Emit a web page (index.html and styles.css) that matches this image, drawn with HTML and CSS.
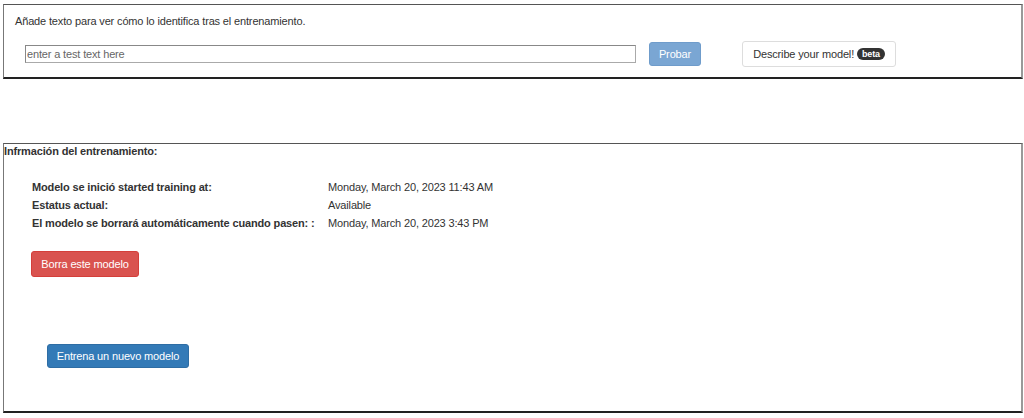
FILE: index.html
```html
<!DOCTYPE html>
<html lang="es">
<head>
  <meta charset="UTF-8" />
  <title>Modelo</title>
  <link rel="stylesheet" href="styles.css">
</head>
<body>
  <div class="panel test-panel">
    <div class="intro">Añade texto para ver cómo lo identifica tras el entrenamiento.</div>
    <div class="test-row">
      <input type="text" class="test-input" placeholder="enter a test text here" />
      <button class="btn btn-try">Probar</button>
      <button class="btn btn-describe">Describe your model! <span class="badge">beta</span></button>
    </div>
  </div>

  <div class="panel info-panel">
    <div class="info-title">Infrmación del entrenamiento:</div>
    <div class="info-table">
      <div class="label">Modelo se inició started training at:</div>
      <div class="value">Monday, March 20, 2023 11:43 AM</div>
      <div class="label">Estatus actual:</div>
      <div class="value">Available</div>
      <div class="label">El modelo se borrará automáticamente cuando pasen: :</div>
      <div class="value">Monday, March 20, 2023 3:43 PM</div>
    </div>
    <button class="btn btn-delete">Borra este modelo</button>
    <button class="btn btn-new">Entrena un nuevo modelo</button>
  </div>
</body>
</html>
```

FILE: styles.css
```css
body {
  font-family: "Liberation Sans", Arial, sans-serif;
  font-size: 11px;
  letter-spacing: -0.15px;
  color: #333;
  margin: 0;
  padding: 0;
  background-color: #fff;
}
.panel {
  margin-left: 3px;
  border-style: solid;
  border-width: 1px 2px 2px 1px;
  border-color: #555 #999 #222 #777;
}
.test-panel {
  margin-top: 4px;
  padding: 9px 0 10px 11px;
  box-sizing: border-box;
  width: 1020px;
}
.intro {
  line-height: 14px;
}
.test-row {
  display: flex;
  align-items: center;
  margin-top: 13px;
  padding-left: 10px;
}
.test-input {
  width: 611px;
  height: 18px;
  box-sizing: border-box;
  border: 1px solid #777;
  border-color: #888 #aaa #aaa #888;
  padding: 0 1px;
  font-family: "Liberation Sans", Arial, sans-serif;
  font-size: 11px;
  letter-spacing: -0.15px;
  color: #333;
}
.test-input::placeholder {
  color: #666;
}
.btn {
  font-family: "Liberation Sans", Arial, sans-serif;
  font-size: 11px;
  letter-spacing: -0.15px;
  border: 1px solid transparent;
  border-radius: 3px;
  cursor: pointer;
  line-height: 14px;
}
.btn-try {
  margin-left: 13px;
  width: 52px;
  height: 24px;
  padding: 0;
  background-color: #7aa6d3;
  border-color: #6f9ccb;
  color: #fff;
}
.btn-describe {
  margin-left: 41px;
  width: 154px;
  height: 26px;
  padding: 0;
  background-color: #fff;
  border-color: #ddd;
  color: #333;
}
.badge {
  display: inline-block;
  background-color: #333;
  color: #fff;
  font-size: 9px;
  font-weight: bold;
  line-height: 12px;
  padding: 0 5px;
  border-radius: 7px;
  vertical-align: 1px;
}
.info-panel {
  margin-top: 64px;
  height: 270px;
  box-sizing: border-box;
  width: 1020px;
}
.info-title {
  font-weight: bold;
  line-height: 14px;
}
.info-table {
  display: grid;
  grid-template-columns: 296px auto;
  margin: 20px 0 0 28px;
  line-height: 18px;
  white-space: nowrap;
}
.label {
  font-weight: bold;
}
.btn-delete {
  display: block;
  margin: 19px 0 0 27px;
  width: 108px;
  height: 26px;
  padding: 0;
  background-color: #d9534f;
  border-color: #d43f3a;
  color: #fff;
}
.btn-new {
  display: block;
  margin: 67px 0 0 43px;
  width: 142px;
  height: 24px;
  padding: 0;
  background-color: #337ab7;
  border-color: #2e6da4;
  color: #fff;
}
```
